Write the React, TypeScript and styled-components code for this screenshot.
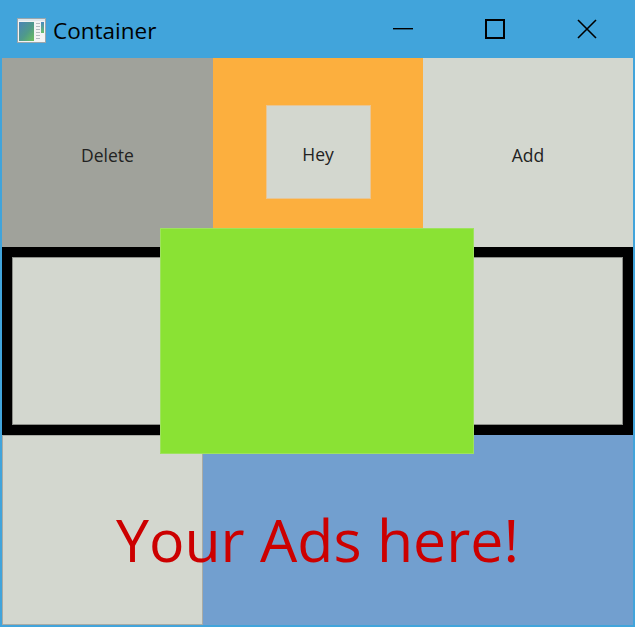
import React from "react";
import styled, { createGlobalStyle } from "styled-components";

const Global = createGlobalStyle`
  html, body { margin: 0; padding: 0; background: #41a4db; }
  body { width: 635px; height: 627px; overflow: hidden; }
  * { box-sizing: border-box; }
`;

const Window = styled.div`
  width: 635px;
  height: 627px;
  background: #41a4db;
  padding: 0 2px 2px 2px;
  display: flex;
  flex-direction: column;
  font-family: "Open Sans", "Noto Sans", sans-serif;
`;

const TitleBar = styled.div`
  height: 58px;
  flex: none;
  display: flex;
  align-items: center;
`;

const AppIcon = styled.svg`
  margin-left: 14px;
  margin-top: 1px;
  flex: none;
`;

const Title = styled.div`
  margin-left: 7px;
  padding-top: 3px;
  font-size: 22.5px;
  color: #000;
  flex: 1;
`;

const Controls = styled.div`
  display: flex;
  height: 100%;
`;

const ControlButton = styled.div`
  width: 92px;
  height: 100%;
  display: flex;
  align-items: center;
  justify-content: center;
`;

const Content = styled.div`
  flex: 1;
  position: relative;
  display: grid;
  grid-template-rows: 189px 188px 1fr;
`;

const TopRow = styled.div`
  display: grid;
  grid-template-columns: 211px 210px 1fr;
`;

const Cell = styled.div<{ $bg: string }>`
  background: ${(p) => p.$bg};
  display: flex;
  align-items: center;
  justify-content: center;
`;

const Label = styled.span`
  font-size: 17.5px;
  color: #222;
  padding-top: 4px;
`;

const HeyBox = styled.div`
  width: 105px;
  height: 94px;
  background: #d3d7cf;
  border: 1px solid #e8c594;
  display: flex;
  align-items: center;
  justify-content: center;
  margin-top: -1px;
`;

const FramedRow = styled.div`
  border: 10px solid #000;
  display: flex;
`;

const FramedInner = styled.div`
  flex: 1;
  background: #d3d7cf;
  border: 1px solid #8d8f8a;
`;

const BottomRow = styled.div`
  display: grid;
  grid-template-columns: 201px 1fr;
  grid-template-rows: 1fr;
`;

const BottomCell = styled.div<{ $bg: string; $col: number; $border?: boolean }>`
  grid-row: 1;
  grid-column: ${(p) => p.$col};
  background: ${(p) => p.$bg};
  border: ${(p) => (p.$border ? "1px solid #a9aba5" : "none")};
`;

const AdsText = styled.div`
  grid-row: 1;
  grid-column: 1 / -1;
  display: flex;
  align-items: center;
  justify-content: center;
  padding-top: 17px;
  font-size: 59px;
  color: #cc0000;
  z-index: 1;
`;

const GreenOverlay = styled.div`
  position: absolute;
  left: 158px;
  top: 170px;
  width: 314px;
  height: 226px;
  background: #8ae234;
  border: 1px solid #9ee25f;
  z-index: 2;
`;

function WindowIcon() {
  return (
    <AppIcon width="30" height="26" viewBox="0 0 30 26">
      <defs>
        <linearGradient id="pane" x1="0" y1="0" x2="1" y2="1">
          <stop offset="0" stopColor="#4a84b8" />
          <stop offset="0.55" stopColor="#4f9a8a" />
          <stop offset="1" stopColor="#6cbf5c" />
        </linearGradient>
        <linearGradient id="bar" x1="0" y1="0" x2="0" y2="1">
          <stop offset="0" stopColor="#4a8cc0" />
          <stop offset="1" stopColor="#6abf6a" />
        </linearGradient>
      </defs>
      <rect x="1.5" y="1.5" width="28" height="24" fill="#f3f4f4" stroke="#9aa6ac" />
      <rect x="2" y="2" width="27" height="2" fill="#dfe6ea" />
      <rect x="3" y="5" width="15" height="19" fill="url(#pane)" />
      <rect x="25" y="5" width="3" height="11" fill="url(#bar)" />
      {[6, 9, 12, 15, 18, 21].map((y) => (
        <rect key={y} x="20" y={y} width="4" height="1" fill="#b5bcc0" />
      ))}
    </AppIcon>
  );
}

export default function App() {
  return (
    <>
      <Global />
      <Window>
        <TitleBar>
          <WindowIcon />
          <Title>Container</Title>
          <Controls>
            <ControlButton>
              <svg width="20" height="20" viewBox="0 0 20 20">
                <rect x="0" y="9" width="20" height="1.4" fill="#000" />
              </svg>
            </ControlButton>
            <ControlButton>
              <svg width="20" height="20" viewBox="0 0 20 20">
                <rect x="1" y="1" width="18" height="18" fill="none" stroke="#000" strokeWidth="2" />
              </svg>
            </ControlButton>
            <ControlButton>
              <svg width="20" height="20" viewBox="0 0 20 20">
                <path d="M1 1 L19 19 M19 1 L1 19" stroke="#000" strokeWidth="1.6" />
              </svg>
            </ControlButton>
          </Controls>
        </TitleBar>
        <Content>
          <TopRow>
            <Cell $bg="#a0a29b">
              <Label>Delete</Label>
            </Cell>
            <Cell $bg="#fcaf3e">
              <HeyBox>
                <Label>Hey</Label>
              </HeyBox>
            </Cell>
            <Cell $bg="#d3d7cf">
              <Label>Add</Label>
            </Cell>
          </TopRow>
          <FramedRow>
            <FramedInner />
          </FramedRow>
          <BottomRow>
            <BottomCell $bg="#d3d7cf" $col={1} $border />
            <BottomCell $bg="#729fcf" $col={2} />
            <AdsText>Your Ads here!</AdsText>
          </BottomRow>
          <GreenOverlay />
        </Content>
      </Window>
    </>
  );
}
